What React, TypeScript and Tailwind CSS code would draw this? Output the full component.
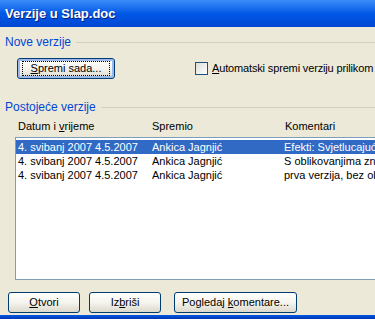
import React from 'react';

const font = { fontFamily: '"Liberation Sans", Arial, sans-serif' };

const rows = [
  { date: '4. svibanj 2007 4.5.2007', by: 'Ankica Jagnjić', note: 'Efekti: Svjetlucajući tekst', selected: true },
  { date: '4. svibanj 2007 4.5.2007', by: 'Ankica Jagnjić', note: 'S oblikovanjima znakova', selected: false },
  { date: '4. svibanj 2007 4.5.2007', by: 'Ankica Jagnjić', note: 'prva verzija, bez oblikovanja', selected: false },
];

const XpButton: React.FC<{ className?: string; focused?: boolean; children: React.ReactNode }> = ({ className = '', focused, children }) => (
  <button
    className={`shrink-0 h-[21px] rounded-[3px] border border-[#003C74] bg-gradient-to-b from-[#FFFFFF] via-[#F5F4EE] to-[#DCD8CC] text-[11px] leading-none text-black whitespace-nowrap flex items-center justify-center ${focused ? 'shadow-[inset_0_0_0_2px_#9DB9EB]' : ''} ${className}`}
  >
    {focused ? (
      <span className="w-[88px] h-[15px] border border-dotted border-black flex items-center justify-center">{children}</span>
    ) : (
      children
    )}
  </button>
);

const GroupLabel: React.FC<{ children: React.ReactNode }> = ({ children }) => (
  <div className="flex items-center gap-[5px] pl-[5px]">
    <span className="text-[12px] leading-[13px] text-[#0046D5] whitespace-nowrap">{children}</span>
    <div className="flex-1 h-px bg-[#D0D0BF]" />
  </div>
);

export default function App() {
  return (
    <div className="w-[375px] h-[319px] overflow-hidden bg-[#ECE9D8] flex flex-col" style={font}>
      {/* Title bar */}
      <div className="h-[27px] shrink-0 bg-gradient-to-b from-[#3A8CF8] via-[#0058E6] to-[#0047D4] flex items-center pl-[5px]">
        <span className="text-white font-bold text-[13px] leading-none [text-shadow:1px_1px_0_#0A1E78]">Verzije u Slap.doc</span>
      </div>

      <div className="flex-1 flex flex-col">
        <div className="mt-[9px]">
          <GroupLabel>Nove verzije</GroupLabel>
        </div>

        <div className="mt-[9px] flex items-center">
          <XpButton focused className="ml-[17px] w-[98px]">
            <span className="underline">S</span>premi sada...
          </XpButton>
          <div className="ml-[80px] shrink-0 flex items-center gap-[4px]">
            <div className="shrink-0 w-[13px] h-[13px] border border-[#1C5180] bg-gradient-to-br from-[#DCDCD7] to-[#FFFFFF]" />
            <span className="text-[11px] tracking-[-0.15px] whitespace-nowrap">
              <span className="underline">A</span>utomatski spremi verziju prilikom
            </span>
          </div>
        </div>

        <div className="mt-[22px]">
          <GroupLabel>Postojeće verzije</GroupLabel>
        </div>

        {/* Column headers */}
        <div className="mt-[5px] h-[14px] flex items-center text-[11px] leading-none whitespace-nowrap">
          <span className="shrink-0 ml-[18px] w-[134px]">
            Datum i <span className="underline">v</span>rijeme
          </span>
          <span className="shrink-0 w-[133px]">Spremio</span>
          <span className="shrink-0">Komentari</span>
        </div>

        {/* List */}
        <div className="shrink-0 ml-[15px] mt-[4px] w-[400px] h-[143px] border-l border-t border-b border-[#7F9DB9] bg-white pt-[2px] flex flex-col">
          {rows.map((r, i) => (
            <div
              key={i}
              className={`h-[14px] flex items-center text-[11px] leading-none whitespace-nowrap overflow-hidden ${r.selected ? 'bg-[#316AC5] text-white' : 'text-black'}`}
            >
              <span className="shrink-0 ml-[2px] w-[134px]">{r.date}</span>
              <span className="shrink-0 w-[132px]">{r.by}</span>
              <span className="shrink-0">{r.note}</span>
            </div>
          ))}
        </div>

        {/* Bottom buttons */}
        <div className="mt-[12px] flex items-center">
          <XpButton className="ml-[8px] w-[72px]">
            <span className="underline">O</span>tvori
          </XpButton>
          <XpButton className="ml-[9px] w-[72px]">
            Iz<span className="underline">b</span>riši
          </XpButton>
          <XpButton className="ml-[13px] w-[123px]">
            Pogledaj&nbsp;<span className="underline">k</span>omentare...
          </XpButton>
        </div>
      </div>

      <div className="h-[4px] shrink-0 bg-gradient-to-b from-[#0058E6] to-[#0036B0]" />
    </div>
  );
}
